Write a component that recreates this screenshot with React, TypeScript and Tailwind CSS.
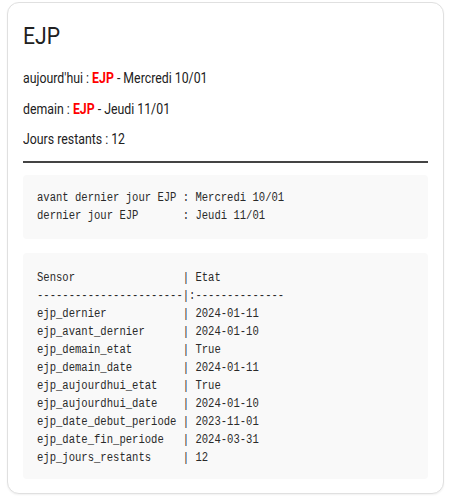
import React from "react";

const block1 = `avant dernier jour EJP : Mercredi 10/01
dernier jour EJP       : Jeudi 11/01`;

const block2 = `Sensor                 | Etat
-----------------------|:--------------
ejp_dernier            | 2024-01-11
ejp_avant_dernier      | 2024-01-10
ejp_demain_etat        | True
ejp_demain_date        | 2024-01-11
ejp_aujourdhui_etat    | True
ejp_aujourdhui_date    | 2024-01-10
ejp_date_debut_periode | 2023-11-01
ejp_date_fin_periode   | 2024-03-31
ejp_jours_restants     | 12`;

// the screenshot is squeezed horizontally, so text is narrowed with scale-x
function CodeBlock({ text, pad }: { text: string; pad: string }) {
  return (
    <pre className={`bg-[#f9f9f9] rounded-[4px] px-[14px] ${pad} text-[12px] leading-[18px] text-[#2a2a2a] font-['DejaVu_Sans_Mono',monospace] whitespace-pre overflow-hidden`}>
      <code className="block origin-left scale-x-[0.88]">{text}</code>
    </pre>
  );
}

export default function App() {
  return (
    <div className="w-[451px] h-[500px] bg-white font-['Roboto',sans-serif] text-[#212121] pt-[2px]">
      <div className="mx-[7px] border border-[#e0e0e0] rounded-xl bg-white px-[15px] pt-[17px] pb-[14px] shadow-[0_1px_2px_rgba(0,0,0,0.06)]">
        <h1 className="text-[24px] leading-[32px] font-normal origin-left scale-x-[0.88]">EJP</h1>
        <p className="mt-[16px] text-[14px] leading-[20px] origin-left scale-x-[0.88]">
          aujourd'hui : <b className="text-[#ff0000] font-bold">EJP</b> - Mercredi 10/01
        </p>
        <p className="mt-[10.5px] text-[14px] leading-[20px] origin-left scale-x-[0.88]">
          demain : <b className="text-[#ff0000] font-bold">EJP</b> - Jeudi 11/01
        </p>
        <p className="mt-[10.5px] text-[14px] leading-[20px] origin-left scale-x-[0.88]">Jours restants : 12</p>
        <hr className="mt-[12px] border-0 h-[2px] bg-[#444]" />
        <div className="mt-[12px] flex flex-col gap-[14px]">
          <CodeBlock text={block1} pad="py-[14px]" />
          <CodeBlock text={block2} pad="pt-[16px] pb-[12px]" />
        </div>
      </div>
    </div>
  );
}
